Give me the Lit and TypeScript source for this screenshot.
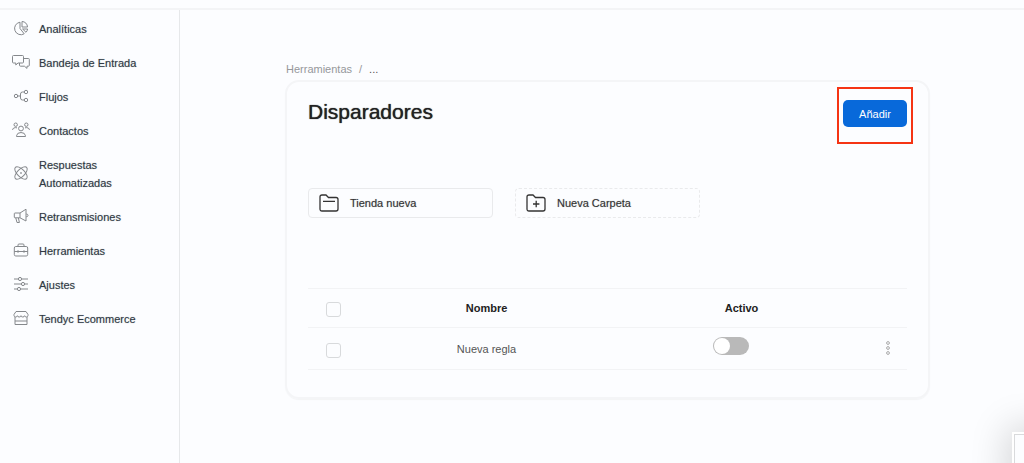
import { LitElement, html, css, svg } from "lit";
import { customElement, state } from "lit/decorators.js";

const icons = {
  analytics: svg`<path d="M8 3.2A6.3 6.3 0 1 0 12.2 14.8L8 9.5Z"/><path d="M10 2.5V8H15.5A5.6 5.6 0 0 0 10 2.5Z"/><path d="M10.6 10H15.6A5.6 5.6 0 0 1 14 13.3Z"/>`,
  inbox: svg`<path d="M1.5 2.5H10.5Q11.5 2.5 11.5 3.5V9Q11.5 10 10.5 10H6L3.8 12V10H1.5Q.5 10 .5 9V3.5Q.5 2.5 1.5 2.5Z"/><path d="M11.5 5.5H16.5Q17.3 5.5 17.3 6.3V12.2Q17.3 13.2 16.5 13.2H15V15.4L12.4 13.2H8.5Q7.5 13.2 7.5 12.2V10"/>`,
  flow: svg`<circle cx="4" cy="9" r="1.7"/><circle cx="14" cy="5" r="1.7"/><circle cx="14" cy="13" r="1.7"/><path d="M5.7 9H8.5M12.3 5H10.5Q8.5 5 8.5 7V11Q8.5 13 10.5 13H12.3"/>`,
  contacts: svg`<circle cx="9" cy="7.5" r="2.4"/><circle cx="3.7" cy="3.7" r="1.7"/><circle cx="14.3" cy="3.7" r="1.7"/><path d="M4.5 15.5V14.8Q5 11.5 9 11.5T13.5 14.8V15.5ZM.7 9V8.2Q1.2 6.6 3.7 6.6L5 6.9M17.3 9V8.2Q16.8 6.6 14.3 6.6L13 6.9"/>`,
  atom: svg`<ellipse cx="9" cy="9" rx="8" ry="3.7" transform="rotate(45 9 9)"/><ellipse cx="9" cy="9" rx="8" ry="3.7" transform="rotate(-45 9 9)"/><circle cx="9" cy="9" r=".5"/>`,
  megaphone: svg`<path d="M3 6H8L14 2.2V14L8 10.8H3Q2.3 10.8 2.3 10.1V6.7Q2.3 6 3 6ZM8 6V10.8M3.8 11L5 15.5H7.4L6.4 11M14.2 7Q16 7 16 8.4T14.2 9.8"/>`,
  toolbox: svg`<rect x="2.3" y="5.5" width="13.4" height="9.5" rx="1.5"/><path d="M6 5.5V4Q6 3 7 3H11Q12 3 12 4V5.5M2.3 10.5H15.7M6 9.2V11.8M12 9.2V11.8"/>`,
  sliders: svg`<path d="M2 4H6.3M9.7 4H16M2 9H9.3M12.7 9H16M2 14H5.3M8.7 14H16"/><circle cx="8" cy="4" r="1.6"/><circle cx="11" cy="9" r="1.6"/><circle cx="7" cy="14" r="1.6"/>`,
  shop: svg`<path d="M4 2.5H14L16 5.5V6.5Q15.8 8 14.4 8T12.6 6.7Q12.4 8 10.8 8T9 6.7Q8.8 8 7.2 8T5.4 6.7Q5 8 3.6 8T2 6.5V5.5ZM3 8V15.5H15V8M3 12H15"/>`,
};

const links: { label: string; icon: keyof typeof icons }[] = [
  { label: "Analíticas", icon: "analytics" },
  { label: "Bandeja de Entrada", icon: "inbox" },
  { label: "Flujos", icon: "flow" },
  { label: "Contactos", icon: "contacts" },
  { label: "Respuestas Automatizadas", icon: "atom" },
  { label: "Retransmisiones", icon: "megaphone" },
  { label: "Herramientas", icon: "toolbox" },
  { label: "Ajustes", icon: "sliders" },
  { label: "Tendyc Ecommerce", icon: "shop" },
];

@customElement("app-root")
export class AppRoot extends LitElement {
  static styles = css`
    :host {
      display: flex;
      flex-direction: column;
      min-height: 100vh;
      background: #fcfdff;
      color: #333;
      font: 11px/18px "Liberation Sans", Arial, sans-serif;
    }
    * { box-sizing: border-box; }
    button { font: inherit; color: inherit; cursor: pointer; }
    svg { fill: none; stroke: currentColor; display: block; flex: none; }
    .topbar { height: 10px; border-bottom: 2px solid #f3f4f6; }
    .body { flex: 1; display: flex; }
    .sidebar {
      flex: none;
      width: 180px;
      padding-top: 2px;
      border-right: 1px solid #e6e8ea;
    }
    .link {
      display: flex;
      align-items: center;
      gap: 9px;
      padding: 8px 24px 8px 12px;
      color: #2f3943;
      text-decoration: none;
      text-shadow: 0 0 1px #2f394366;
    }
    .link svg { width: 18px; height: 18px; margin: -1px 0 1px; color: #85888c; }
    .main { flex: 1; min-width: 0; padding: 50px 94px 24px 106px; }
    .crumbs { display: flex; gap: 7px; color: #96989b; }
    .crumbs a { color: inherit; text-decoration: none; }
    .crumbs .current { color: #555; }
    .card {
      margin: 2px 0 0 -1px;
      padding: 18px 21px 27px;
      border: 2px solid #f4f5f7;
      border-radius: 14px;
      box-shadow: 0 1px 1px #f3f4f6;
    }
    .head { display: flex; justify-content: space-between; align-items: flex-start; }
    .title {
      margin: 0;
      font-size: 21px;
      line-height: 24px;
      font-weight: 400;
      color: #222;
      text-shadow: 0 0 1px #222;
    }
    .action { position: relative; }
    .add {
      display: block;
      width: 64px;
      height: 27px;
      padding: 0;
      border: 0;
      border-radius: 5px;
      background: #0869da;
      color: #fff;
    }
    .marker {
      position: absolute;
      inset: -13px -6px -17px -6px;
      border: 2px solid #f53414;
      pointer-events: none;
    }
    .folders { display: flex; flex-wrap: wrap; gap: 22px; margin: 61px 0 70px; }
    .folder {
      display: flex;
      align-items: center;
      gap: 11px;
      width: 185px;
      height: 30px;
      padding: 0 10px;
      border: 1px solid #e9eaec;
      border-radius: 4px;
      background: none;
      text-shadow: 0 0 1px #33333366;
    }
    .folder.new { border-style: dashed; }
    .folder svg { width: 20px; height: 18px; color: #333; }
    .table { width: 100%; border-collapse: collapse; table-layout: fixed; text-align: center; }
    .table th, .table td { padding: 0; border: solid #f2f3f5; border-width: 1px 0; }
    .table th { height: 39px; color: #222; }
    .table td { height: 42px; color: #555; }
    .pick { width: 51px; }
    .menu { width: 38px; }
    .check {
      appearance: none;
      display: block;
      width: 15px;
      height: 15px;
      margin: 3px auto 0;
      border: 1px solid #d8dadc;
      border-radius: 3px;
      background: transparent;
    }
    .check:checked { background: #0869da; border-color: #0869da; }
    .switch {
      appearance: none;
      display: block;
      width: 36px;
      height: 18px;
      margin: 0 auto;
      border-radius: 9px;
      background: #b9b9b9;
    }
    .switch::before {
      content: "";
      display: block;
      width: 16px;
      height: 16px;
      margin: 1px;
      border-radius: 50%;
      background: #fff;
    }
    .switch:checked { background: #0869da; }
    .switch:checked::before { margin-left: 19px; }
    .table .toggle { padding: 0 22px 6px 0; }
    .more { display: block; margin: 0 auto 2px; padding: 0; border: 0; background: none; color: #aaa; }
    .more svg { width: 6px; height: 16px; }
    .widget {
      position: fixed;
      right: -88px;
      bottom: -89px;
      width: 100px;
      height: 120px;
      border: 2px solid #fff;
      outline: 1px solid #d9dadc;
      outline-offset: -3px;
      background: #fcfdff;
      box-shadow: 0 0 34px 6px #00000026;
    }
  `;

  @state() private active = false;

  render() {
    return html`
      <header class="topbar"></header>
      <div class="body">
        <nav class="sidebar">
          ${links.map(
            (l) => html`<a class="link" href="#"><svg viewBox="0 0 18 18" aria-hidden="true">${icons[l.icon]}</svg><span>${l.label}</span></a>`
          )}
        </nav>
        <main class="main">
          <nav class="crumbs"><a href="#">Herramientas</a><span>/</span><span class="current">...</span></nav>
          <section class="card">
            <div class="head">
              <h1 class="title">Disparadores</h1>
              <div class="action">
                <button class="add">Añadir</button>
                <div class="marker"></div>
              </div>
            </div>
            <div class="folders">
              <button class="folder">
                <svg viewBox="0 0 20 18" stroke-width="1.3"><path d="M1 3Q1 1 3 1H7L9.5 3.5H17Q19 3.5 19 5.5V15Q19 17 17 17H3Q1 17 1 15ZM4 7.3H16"/></svg>
                Tienda nueva
              </button>
              <button class="folder new">
                <svg viewBox="0 0 20 18" stroke-width="1.3"><path d="M1 3Q1 1 3 1H7L9.5 3.5H17Q19 3.5 19 5.5V15Q19 17 17 17H3Q1 17 1 15ZM7 10H13.4M10.2 6.8V13.2"/></svg>
                Nueva Carpeta
              </button>
            </div>
            <table class="table">
              <thead>
                <tr>
                  <th class="pick"><input class="check" type="checkbox" aria-label="Seleccionar todo" /></th>
                  <th>Nombre</th>
                  <th>Activo</th>
                  <th class="menu"></th>
                </tr>
              </thead>
              <tbody>
                <tr>
                  <td><input class="check" type="checkbox" aria-label="Seleccionar Nueva regla" /></td>
                  <td>Nueva regla</td>
                  <td class="toggle">
                    <input class="switch" type="checkbox" role="switch" aria-label="Activo" .checked=${this.active}
                      @change=${(e: Event) => (this.active = (e.target as HTMLInputElement).checked)} />
                  </td>
                  <td>
                    <button class="more" aria-label="Opciones">
                      <svg viewBox="0 0 6 16"><circle cx="3" cy="3" r="1.4"/><circle cx="3" cy="8" r="1.4"/><circle cx="3" cy="13" r="1.4"/></svg>
                    </button>
                  </td>
                </tr>
              </tbody>
            </table>
          </section>
        </main>
      </div>
      <aside class="widget"></aside>
    `;
  }
}
